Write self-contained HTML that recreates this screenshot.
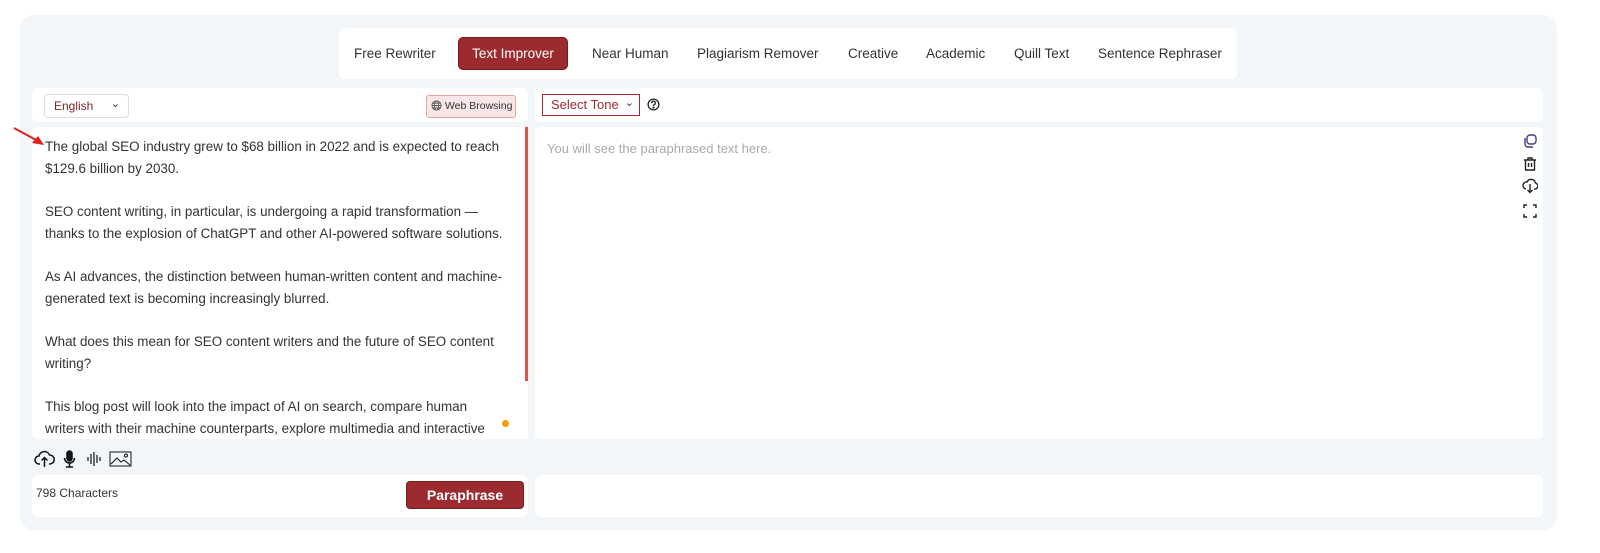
<!DOCTYPE html>
<html><head><style>
*{margin:0;padding:0;box-sizing:border-box}
body{width:1600px;height:553px;background:#fff;font-family:"Liberation Sans",Arial,sans-serif;position:relative;overflow:hidden;color:#222}
.abs{position:absolute}
.outer{left:20px;top:15px;width:1537px;height:515px;background:#f3f6f9;border-radius:14px}
.tabs{left:339px;top:28px;width:898px;height:51px;background:#fff;border-radius:6px}
.tab{position:absolute;top:46px;font-size:13.5px;color:#333;white-space:nowrap}
.white{background:#fff;border-radius:6px}
.l{position:absolute;left:45px;font-size:13.4px;color:#333;white-space:nowrap;line-height:16px}
</style></head><body>
<div class="abs outer"></div>
<div class="abs tabs"></div>
<div class="tab" style="left:354px">Free Rewriter</div>
<div class="abs" style="left:458px;top:37px;width:110px;height:33px;background:#9b2b2e;border:1px solid #7a1b1e;border-radius:5px;color:#fff;font-size:13.5px;line-height:31px;text-align:center">Text Improver</div>
<div class="tab" style="left:592px">Near Human</div>
<div class="tab" style="left:697px">Plagiarism Remover</div>
<div class="tab" style="left:848px">Creative</div>
<div class="tab" style="left:926px">Academic</div>
<div class="tab" style="left:1014px">Quill Text</div>
<div class="tab" style="left:1098px">Sentence Rephraser</div>

<div class="abs white" style="left:32px;top:88px;width:496px;height:34px"></div>
<div class="abs" style="left:44px;top:94px;width:85px;height:24px;border:1px solid #ddd;border-radius:4px;font-size:12px;color:#7a2a2a;line-height:22px;padding-left:9px">English<span style="position:absolute;right:8px;top:-2px;color:#333;font-size:11px">&#8964;</span></div>
<div class="abs" style="left:426px;top:95px;width:90px;height:23px;border:1px solid #e5a5a5;background:#f9e6e6;border-radius:3px;font-size:10.5px;color:#333;line-height:21px;padding-left:4px;white-space:nowrap;overflow:hidden">
<svg width="11" height="11" viewBox="0 0 12 12" style="vertical-align:-2px" fill="none" stroke="#555" stroke-width="1"><circle cx="6" cy="6" r="5"/><ellipse cx="6" cy="6" rx="2.2" ry="5"/><path d="M1 6h10M2 3.5h8M2 8.5h8"/></svg> Web Browsing</div>

<div class="abs white" style="left:535px;top:88px;width:1008px;height:34px"></div>
<div class="abs" style="left:542px;top:94px;width:98px;height:22px;border:1px solid #9b2b2e;font-size:13px;color:#9b2b2e;line-height:20px;padding-left:8px;white-space:nowrap">Select Tone<span style="position:absolute;right:5px;top:-2px;font-size:11px;color:#333">&#8964;</span></div>
<svg class="abs" style="left:647px;top:98px" width="13" height="13" viewBox="0 0 14 14" fill="none" stroke="#222" stroke-width="1.4"><circle cx="7" cy="7" r="5.8"/><path d="M5 5.5a2 2 0 1 1 2.5 1.8c-.5.2-.5.6-.5 1.2"/><circle cx="7" cy="10.3" r=".5" fill="#222"/></svg>

<div class="abs white" style="left:32px;top:127px;width:496px;height:312px;border-radius:6px 0 0 6px"></div>
<div class="abs" style="left:525px;top:127px;width:3px;height:254px;background:#d9534f"></div>
<svg class="abs" style="left:12px;top:126px" width="34" height="22" viewBox="0 0 34 22"><path d="M2 2L26 15" stroke="#e02020" stroke-width="2"/><path d="M32 19L20 17L26 10Z" fill="#e02020"/></svg>
<div class="l" style="top:139px">The global SEO industry grew to $68 billion in 2022 and is expected to reach</div>
<div class="l" style="top:161px">$129.6 billion by 2030.</div>
<div class="l" style="top:204px">SEO content writing, in particular, is undergoing a rapid transformation —</div>
<div class="l" style="top:226px">thanks to the explosion of ChatGPT and other AI-powered software solutions.</div>
<div class="l" style="top:269px">As AI advances, the distinction between human-written content and machine-</div>
<div class="l" style="top:291px">generated text is becoming increasingly blurred.</div>
<div class="l" style="top:334px">What does this mean for SEO content writers and the future of SEO content</div>
<div class="l" style="top:356px">writing?</div>
<div class="l" style="top:399px">This blog post will look into the impact of AI on search, compare human</div>
<div class="l" style="top:421px">writers with their machine counterparts, explore multimedia and interactive</div>
<div class="abs" style="left:502px;top:420px;width:7px;height:7px;border-radius:50%;background:#f5a000"></div>

<div class="abs white" style="left:535px;top:127px;width:1008px;height:312px"></div>
<div class="abs" style="left:547px;top:141px;font-size:13px;color:#aaa">You will see the paraphrased text here.</div>
<svg class="abs" style="left:1522px;top:133px" width="16" height="88" viewBox="0 0 16 88" fill="none" stroke="#222" stroke-width="1.4">
<rect x="5" y="2" width="9" height="9" rx="3" stroke="#443c7a"/><path d="M3 5v6a3 3 0 0 0 3 3h5" stroke="#443c7a"/>
<path d="M2 27h12M6 27v-2h4v2M3.5 27v10h9V27M6.5 30v4M9.5 30v4"/>
<path d="M4 56a3.5 3.5 0 0 1 1-7 4.5 4.5 0 0 1 8.5 1 3 3 0 0 1-1.5 6M8 51v8M5.5 57l2.5 2.5 2.5-2.5"/>
<path d="M2 75v-3h3M11 72h3v3M14 81v3h-3M5 84H2v-3"/></svg>

<svg class="abs" style="left:34px;top:449px" width="100" height="20" viewBox="0 0 100 20" fill="none" stroke="#111" stroke-width="1.5">
<path d="M6 15H5a4 4 0 0 1 0-8 5.5 5.5 0 0 1 10.5-1A4 4 0 0 1 16 15h-1M10.5 18v-9M7.5 11.5l3-3 3 3"/>
<rect x="33" y="2" width="5" height="10" rx="2.5" fill="#111"/><path d="M30.5 9a5 5 0 0 0 10 0M35.5 14v4M32 18h7"/>
<path d="M54 8v4M57 5v10M60 3v14M63 6v8M66 8v4" stroke-width="1.2"/>
<rect x="76" y="3" width="21" height="14" stroke-width="1"/><path d="M77 15l6-6 4 4 3-2 6 5" stroke-width="1"/><circle cx="92" cy="6.5" r="1.5" stroke-width="1"/></svg>

<div class="abs white" style="left:32px;top:475px;width:496px;height:42px"></div>
<div class="abs" style="left:36px;top:486px;font-size:12px;color:#333">798 Characters</div>
<div class="abs" style="left:406px;top:481px;width:118px;height:28px;background:#9b2b2e;border:1px solid #7a1b1e;border-radius:4px;color:#fff;font-weight:bold;font-size:14px;line-height:26px;text-align:center">Paraphrase</div>
<div class="abs white" style="left:535px;top:475px;width:1008px;height:42px"></div>
</body></html>
